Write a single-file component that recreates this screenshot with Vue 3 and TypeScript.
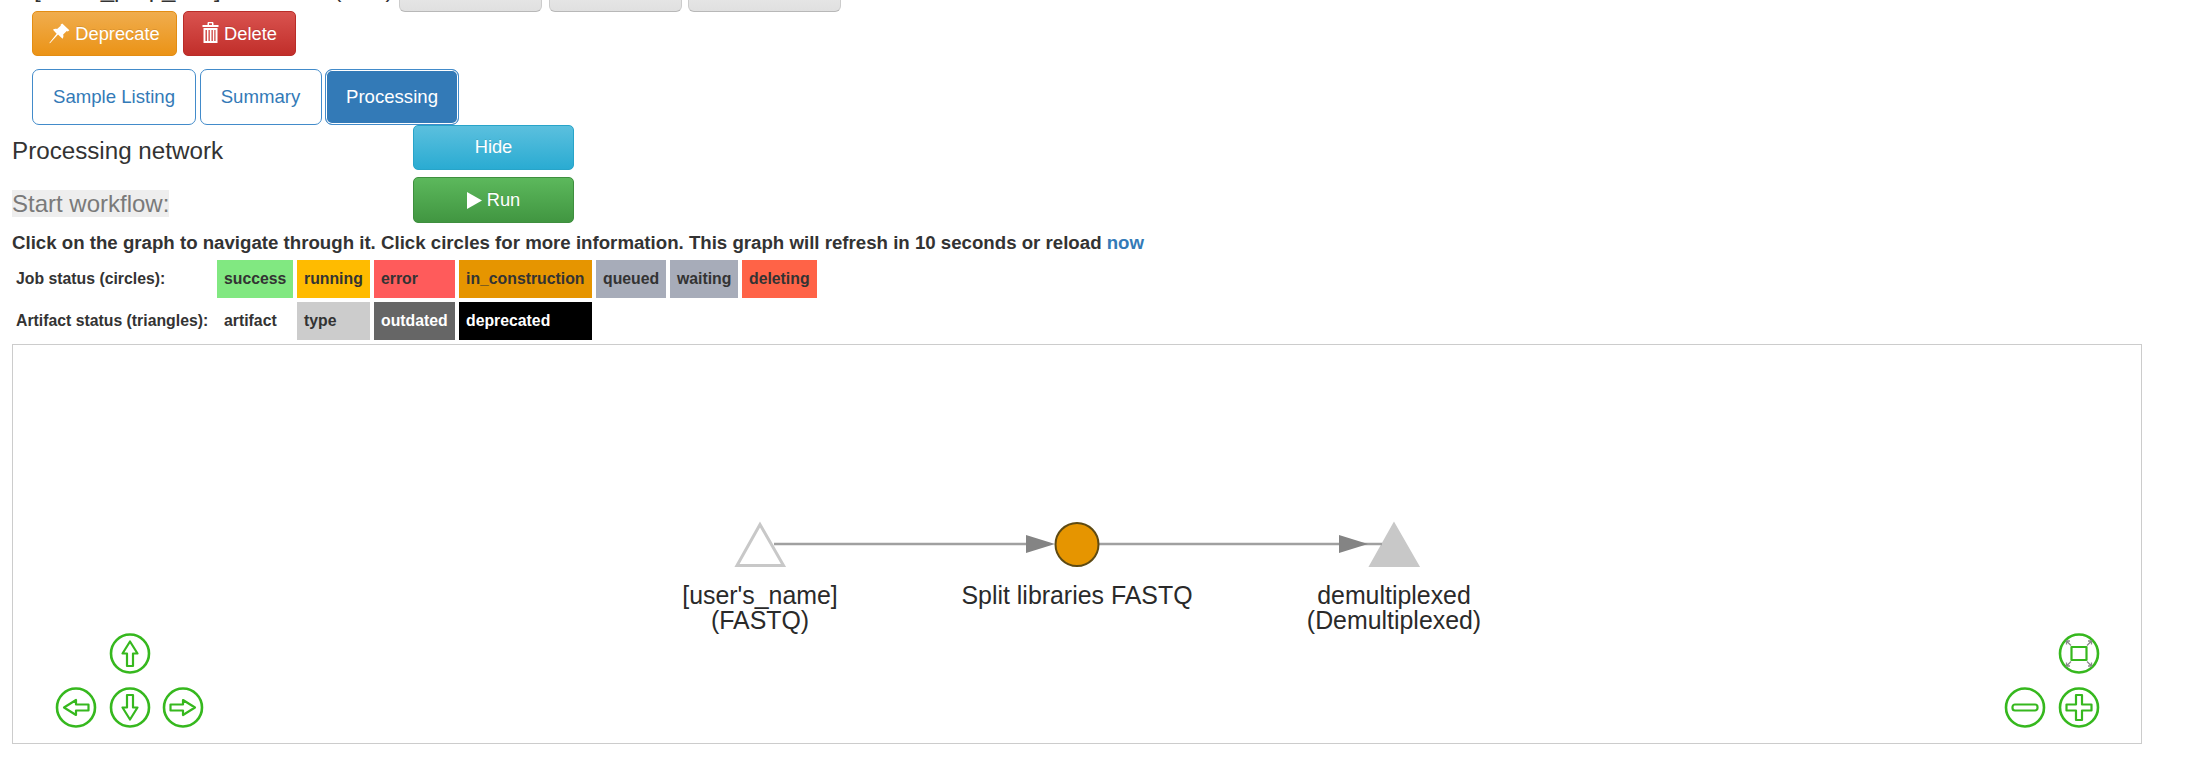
<script setup lang="ts">
interface Cell { label: string; cls: string }
const jobs: Cell[] = [
  { label: 'success', cls: 'c-success' },
  { label: 'running', cls: 'c-running' },
  { label: 'error', cls: 'c-error' },
  { label: 'in_construction', cls: 'c-construction' },
  { label: 'queued', cls: 'c-queued' },
  { label: 'waiting', cls: 'c-queued' },
  { label: 'deleting', cls: 'c-deleting' },
]
const artifacts: Cell[] = [
  { label: 'artifact', cls: '' },
  { label: 'type', cls: 'c-type' },
  { label: 'outdated', cls: 'c-outdated' },
  { label: 'deprecated', cls: 'c-deprecated' },
]
const arrows = [
  { x: 130, y: 653.5, r: 0 },
  { x: 76, y: 707.5, r: -90 },
  { x: 130, y: 707.5, r: 180 },
  { x: 183, y: 707.5, r: 90 },
]
const corners = [0, 90, 180, 270]
</script>

<template>
  <div class="page">
    <div class="top-row">
      <div class="clipped-title">[name_prep_test] <span class="clipped-id">(ID 1)</span></div>
      <span class="grey g1"></span>
      <span class="grey g2"></span>
      <span class="grey g3"></span>
    </div>

    <div class="actions">
      <button class="btn btn-deprecate">
        <svg class="ico" width="21" height="21" viewBox="0 0 20 20">
          <path d="M12.6 0.4 19.4 7l-1.5 1-1-.4-3.4 3.4c.5 1.7.2 3-.6 3.9L8.6 11 .9 19.300.3 19l7-8.800-3.500-3.800c1-.8 2.300-1.100 3.900-.6L11.200 2.600l-.2-1z" fill="#fff" />
        </svg>
        Deprecate
      </button>
      <button class="btn btn-delete">
        <svg class="ico ico-trash" width="17" height="21" viewBox="0 0 17 21">
          <path d="M5.500 3V1.200C5.500.5 6 0 6.700 0h3.600c.7 0 1.200.5 1.200 1.200V3H16.500v2H.5V3zM7 1.300V3h3V1.300zM1.500 6h14v15h-14zM3.500 8v11h1.400V8zm3 0v11h1.300V8zm3 0v11h1.300V8zm2.800 0v11h1.200V8z" fill="#fff" fill-rule="evenodd" />
        </svg>
        Delete
      </button>
    </div>

    <nav class="tabs">
      <a class="tab t1">Sample Listing</a>
      <a class="tab t2">Summary</a>
      <a class="tab t3 active">Processing</a>
    </nav>

    <div class="proc">
      <div class="proc-title">Processing network</div>
      <button class="btn btn-hide">Hide</button>
      <div class="start"><span class="start-text">Start workflow:</span></div>
      <button class="btn btn-run">
        <svg class="ico" width="15" height="17" viewBox="0 0 15 17"><path d="M0 0 15 8.500 0 17z" fill="#fff" /></svg>
        Run
      </button>
    </div>

    <p class="hint">Click on the graph to navigate through it. Click circles for more information. This graph will refresh in 10 seconds or reload <a class="now">now</a></p>

    <div class="legend">
      <div class="lab">Job status (circles):</div>
      <div v-for="c in jobs" :key="c.label" class="cell" :class="c.cls">{{ c.label }}</div>
      <div class="lab">Artifact status (triangles):</div>
      <div v-for="c in artifacts" :key="c.label" class="cell" :class="c.cls">{{ c.label }}</div>
    </div>

    <div class="graph">
      <svg class="canvas" width="2128" height="398" viewBox="13 345 2128 398">
        <polygon points="760,524.500 737,565.500 783.500,565.500" fill="#fff" stroke="#c8c8c8" stroke-width="3" />
        <line x1="774" y1="544" x2="1030" y2="544" stroke="#a0a0a0" stroke-width="2.500" />
        <polygon points="1026,535 1055,544 1026,553" fill="#848484" />
        <polygon points="1394,524.500 1371,565.500 1417.500,565.500" fill="#c8c8c8" stroke="#c8c8c8" stroke-width="3" />
        <line x1="1099" y1="544" x2="1382" y2="544" stroke="#a0a0a0" stroke-width="2.500" />
        <polygon points="1339,535 1368,544 1339,553" fill="#848484" />
        <circle cx="1077" cy="544.500" r="21.500" fill="#e69500" stroke="#5e4a12" stroke-width="2" />

        <g class="labels" text-anchor="middle">
          <text x="760" y="604">[user's_name]</text>
          <text x="760" y="629">(FASTQ)</text>
          <text x="1077" y="604">Split libraries FASTQ</text>
          <text x="1394" y="604">demultiplexed</text>
          <text x="1394" y="629">(Demultiplexed)</text>
        </g>

        <g v-for="a in arrows" :key="a.x + a.r" :transform="`translate(${a.x} ${a.y})`">
          <circle r="19" class="nav-ring" />
          <path :transform="`rotate(${a.r})`" d="M0-12 7.500 0H3v12.500H-3V0H-7.500Z" class="nav-shape" />
        </g>

        <g transform="translate(2079 653.500)">
          <circle r="19" class="nav-ring" />
          <g v-for="r in corners" :key="r" :transform="`rotate(${r})`">
            <path d="M8-8 12.500-12.500M9-12.500H12.500V-9" fill="none" stroke="#8a8a8a" stroke-width="1.300" />
          </g>
          <rect x="-7.500" y="-6.500" width="15" height="13" class="nav-shape" />
        </g>
        <g transform="translate(2025 707.500)">
          <circle r="19" class="nav-ring" />
          <rect x="-12.500" y="-3" width="25" height="6" rx="2.500" class="nav-shape" />
        </g>
        <g transform="translate(2079 707.500)">
          <circle r="19" class="nav-ring" />
          <path d="M-3-12.500H3V-3H12.500V3H3V12.500H-3V3H-12.500V-3H-3Z" class="nav-shape" />
        </g>
      </svg>
    </div>
  </div>
</template>

<style>
html, body { margin: 0; background: #fff; }
</style>

<style scoped>
.page {
  width: 2195px;
  height: 759px;
  overflow: hidden;
  box-sizing: border-box;
  padding-left: 12px;
  font-family: "Liberation Sans", Arial, sans-serif;
  color: #333;
}
.top-row {
  height: 12px;
  display: flex;
  align-items: flex-end;
  position: relative;
}
.clipped-title {
  position: absolute;
  left: 22px;
  top: -23px;
  font-size: 24px;
  line-height: 24px;
  white-space: nowrap;
  color: #333;
}
.clipped-id { margin-left: 106px; }
.grey {
  flex: none;
  height: 34px;
  box-sizing: border-box;
  border: 1px solid #ccc;
  border-bottom-color: #b8b8b8;
  border-radius: 6px;
  background: linear-gradient(#eee, #e0e0e0);
}
.g1 { width: 143px; margin-left: 387px; }
.g2 { width: 133px; margin-left: 7px; }
.g3 { width: 153px; margin-left: 6px; }

.btn {
  display: flex;
  align-items: center;
  justify-content: center;
  box-sizing: border-box;
  border-radius: 5px;
  border: 1px solid;
  color: #fff;
  font: 18.300px "Liberation Sans", Arial, sans-serif;
  padding: 0;
  text-shadow: 0 -1px 0 rgba(0, 0, 0, 0.1);
}
.ico { margin-right: 5px; flex: none; }
.ico-trash { margin-right: 5px; margin-top: -2px; }
.actions {
  display: flex;
  gap: 6px;
  height: 45px;
  margin-top: -1px;
  margin-left: 20px;
}
.btn-deprecate {
  width: 145px;
  background: linear-gradient(#f0ad4e, #eb9316);
  border-color: #e38d13;
}
.btn-delete {
  width: 113px;
  background: linear-gradient(#d9534f, #c12e2a);
  border-color: #b92c28;
}
.tabs {
  display: flex;
  gap: 3.500px;
  margin: 13px 0 0 20px;
  height: 56px;
}
.tab {
  display: flex;
  align-items: center;
  justify-content: center;
  box-sizing: border-box;
  border: 1px solid #428bca;
  border-radius: 7px;
  color: #337ab7;
  font-size: 18.600px;
  background: #fff;
}
.t1 { width: 164px; }
.t2 { width: 122px; }
.t3 { width: 134px; }
.active {
  background: #337ab7;
  color: #fff;
  box-shadow: inset 0 0 0 1px #fff;
}
.proc {
  display: grid;
  grid-template-columns: 401px 161px;
  grid-template-rows: 45px 46px;
  row-gap: 7px;
}
.btn-hide {
  padding-bottom: 2px;
  background: linear-gradient(#5bc0de, #2aabd2);
  border-color: #28a4c9;
}
.btn-run {
  background: linear-gradient(#5cb85c, #419641);
  border-color: #3e8f3e;
}
.proc-title {
  font-size: 24.200px;
  line-height: 26px;
  align-self: end;
  margin-bottom: 6px;
  color: #333;
}
.start { align-self: center; margin-top: 6px; }
.start-text {
  display: block;
  width: fit-content;
  font-size: 24px;
  line-height: 27px;
  color: #7a7a7a;
  background: #eee;
}
.hint {
  margin: 10px 0 0;
  font-size: 18.670px;
  font-weight: bold;
  line-height: 20px;
  color: #333;
}
.now { color: #337ab7; }
.legend {
  display: grid;
  grid-template-columns: 201px 76px 73px 81px 133px 70px 68px 75px;
  grid-auto-rows: 38px;
  gap: 4px;
  margin-top: 7px;
  font-size: 15.800px;
  font-weight: bold;
  line-height: 38px;
  white-space: nowrap;
}
.lab { padding-left: 4px; }
.cell { padding-left: 7px; color: #333; }
.c-success { background: #81e881; }
.c-running { background: #ffbb00; }
.c-error { background: #ff5b5b; }
.c-construction { background: #e69500; }
.c-queued { background: #a7acb9; }
.c-deleting { background: #ff6347; }
.c-type { background: #ccc; }
.c-outdated { background: #666; color: #fff; }
.c-deprecated { background: #000; color: #fff; }
.graph {
  width: 2130px;
  height: 400px;
  box-sizing: border-box;
  border: 1px solid #ccc;
  margin-top: 4px;
}
.canvas { display: block; }
.labels text {
  font-family: "Liberation Sans", Arial, sans-serif;
  font-size: 24.900px;
  fill: #2a2a2a;
}
.nav-ring { fill: #fff; stroke: #36b81e; stroke-width: 2.600; }
.nav-shape { fill: #fff; stroke: #36b81e; stroke-width: 2.200; stroke-linejoin: round; }
</style>
